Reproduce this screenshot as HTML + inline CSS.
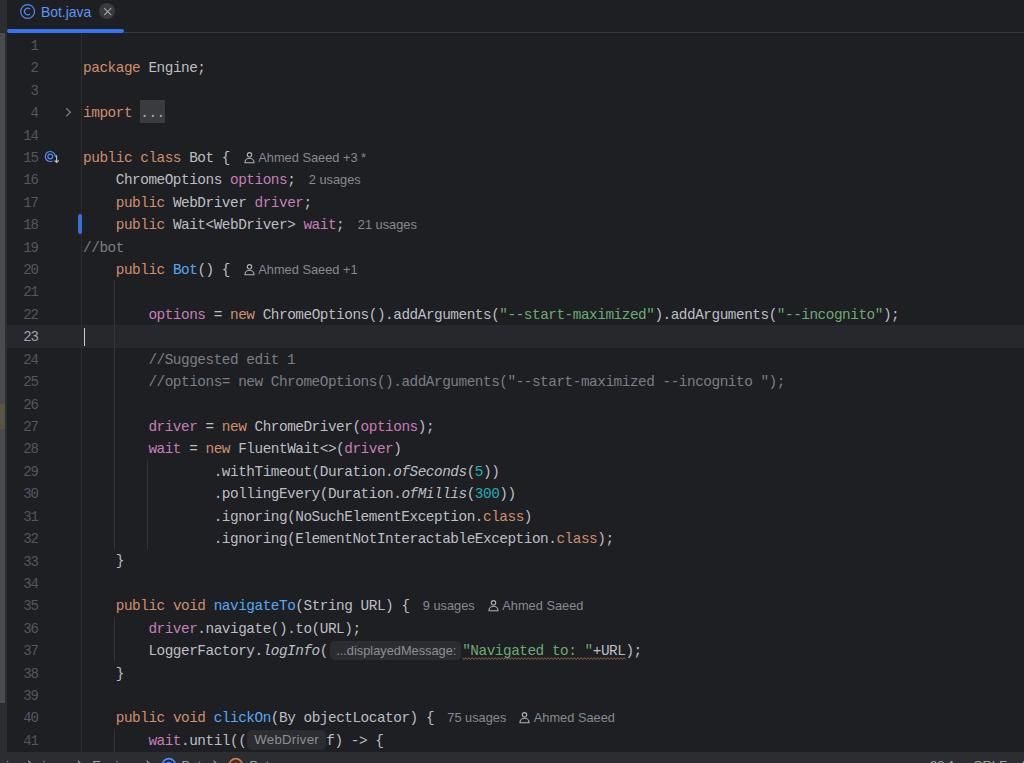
<!DOCTYPE html>
<html><head><meta charset="utf-8">
<style>
*{margin:0;padding:0;box-sizing:border-box}
html,body{width:1024px;height:763px;overflow:hidden;background:#1e1f22}
body{position:relative;font-family:"Liberation Sans",sans-serif}
.a{position:absolute}
#lstrip{position:absolute;left:0;top:0;width:7px;height:763px;background:#2b2d30}
#lstrip2{position:absolute;left:0;top:33px;width:5px;height:670px;background:#4a4b4f}
#ymark{position:absolute;left:0;top:404px;width:5px;height:25px;background:#5b5641}
#tabline{position:absolute;left:124px;top:32px;width:900px;height:1px;background:#393b40}
#tabul{position:absolute;left:7px;top:28.6px;width:117.2px;height:4.8px;border-radius:2.4px;background:#3574f0}
#tabtxt{position:absolute;left:41px;top:4.1px;font-size:13.9px;color:#5a96f6;line-height:16px}
#tabclose{position:absolute;left:99.4px;top:3.3px;width:16px;height:16px;border-radius:50%;background:#393b3f}
#gutline{position:absolute;left:81px;top:33px;width:1px;height:719px;background:#2b2d30}
.ln{position:absolute;left:7px;width:30.6px;height:22.42px;line-height:22.42px;text-align:right;font-family:"Liberation Mono",monospace;font-size:14px;letter-spacing:-1.2px;color:#525760;padding-top:1.1px}
.ln.cur{color:#a1a3ab}
.row{position:absolute;left:83.1px;height:22.42px;line-height:22.42px;white-space:pre;font-family:"Liberation Mono",monospace;font-size:14.4px;letter-spacing:-0.475px;color:#bcbec4;padding-top:1px}
k{color:#cf8e6d} f{color:#c77dbb} s{color:#6aab73;text-decoration:none} c{color:#7a7e85} m{color:#56a8f5} n{color:#2aacb8} i{font-style:italic}
#curband{position:absolute;left:7px;top:325.21px;width:1017px;height:22.42px;background:#26282e}
#caret{position:absolute;left:83.7px;top:327.61px;width:1.4px;height:18px;background:#ced0d6}
.fold{background:#393b40;color:#a8aab0;display:inline-block;height:22.32px;vertical-align:top;margin-top:-1.8px;padding-top:1.8px;padding-right:0.7px}
.hint{display:inline-block;font-family:"Liberation Sans",sans-serif;font-size:13.2px;letter-spacing:0;color:#8c8f94;background:#2b2d30;border-radius:5px;height:19px;line-height:19px;vertical-align:top;margin-top:1.4px;white-space:pre}
.h1{width:130.2px;margin-left:2.45px;margin-right:1.6px;padding-left:5.8px;font-size:12.8px}
.h2{width:79.4px;margin-left:0.5px;margin-right:0;padding-left:7.4px;letter-spacing:0.3px;margin-top:0.4px;height:20px;line-height:19.4px}
.cv{position:absolute;font-size:12.8px;color:#868a91;line-height:22.42px;height:22.42px;white-space:pre;padding-top:1.0px}
.st{position:absolute;top:5.9px;font-size:13px;line-height:16px;color:#a0a2a8;white-space:pre}
.guide{position:absolute;width:1px;background:#313438}
#status{position:absolute;left:0;top:751.7px;width:1024px;height:12px;background:#2b2d30;overflow:hidden}
</style></head><body>
<div id="lstrip"></div><div id="lstrip2"></div><div id="ymark"></div>
<div id="tabline"></div><div id="tabul"></div>
<svg class="a" style="left:20px;top:3.7px" width="15" height="15" viewBox="0 0 15 15"><circle cx="7.6" cy="7.5" r="6.9" fill="none" stroke="#548af7" stroke-width="1.15"/><path d="M10.1 5.1A3.3 3.3 0 1 0 10.1 9.9" fill="none" stroke="#548af7" stroke-width="1.2"/></svg>
<div id="tabtxt">Bot.java</div>
<div id="tabclose"></div>
<svg class="a" style="left:100px;top:3.8px" width="15" height="15" viewBox="0 0 15 15"><path d="M4.2 4.2L11.2 11.2M11.2 4.2L4.2 11.2" stroke="#a4a6ac" stroke-width="1.1"/></svg>
<div id="curband"></div><div id="gutline"></div>
<div class="ln" style="top:33.75px">1</div><div class="row" style="top:33.75px"></div>
<div class="ln" style="top:56.17px">2</div><div class="row" style="top:56.17px"><k>package</k> Engine;</div>
<div class="ln" style="top:78.59px">3</div><div class="row" style="top:78.59px"></div>
<div class="ln" style="top:101.01px">4</div><div class="row" style="top:101.01px"><k>import</k> <span class="fold">...</span></div>
<div class="ln" style="top:123.43px">14</div><div class="row" style="top:123.43px"></div>
<div class="ln" style="top:145.85px">15</div><div class="row" style="top:145.85px"><k>public class</k> Bot {</div>
<div class="ln" style="top:168.27px">16</div><div class="row" style="top:168.27px">    ChromeOptions <f>options</f>;</div>
<div class="ln" style="top:190.69px">17</div><div class="row" style="top:190.69px">    <k>public</k> WebDriver <f>driver</f>;</div>
<div class="ln" style="top:213.11px">18</div><div class="row" style="top:213.11px">    <k>public</k> Wait&lt;WebDriver&gt; <f>wait</f>;</div>
<div class="ln" style="top:235.53px">19</div><div class="row" style="top:235.53px"><c>//bot</c></div>
<div class="ln" style="top:257.95px">20</div><div class="row" style="top:257.95px">    <k>public</k> <m>Bot</m>() {</div>
<div class="ln" style="top:280.37px">21</div><div class="row" style="top:280.37px"></div>
<div class="ln" style="top:302.79px">22</div><div class="row" style="top:302.79px">        <f>options</f> = <k>new</k> ChromeOptions().addArguments(<s>"--start-maximized"</s>).addArguments(<s>"--incognito"</s>);</div>
<div class="ln cur" style="top:325.21px">23</div><div class="row" style="top:325.21px"></div>
<div class="ln" style="top:347.63px">24</div><div class="row" style="top:347.63px">        <c>//Suggested edit 1</c></div>
<div class="ln" style="top:370.05px">25</div><div class="row" style="top:370.05px">        <c>//options= new ChromeOptions().addArguments("--start-maximized --incognito ");</c></div>
<div class="ln" style="top:392.47px">26</div><div class="row" style="top:392.47px"></div>
<div class="ln" style="top:414.89px">27</div><div class="row" style="top:414.89px">        <f>driver</f> = <k>new</k> ChromeDriver(<f>options</f>);</div>
<div class="ln" style="top:437.31px">28</div><div class="row" style="top:437.31px">        <f>wait</f> = <k>new</k> FluentWait&lt;&gt;(<f>driver</f>)</div>
<div class="ln" style="top:459.73px">29</div><div class="row" style="top:459.73px">                .withTimeout(Duration.<i>ofSeconds</i>(<n>5</n>))</div>
<div class="ln" style="top:482.15px">30</div><div class="row" style="top:482.15px">                .pollingEvery(Duration.<i>ofMillis</i>(<n>300</n>))</div>
<div class="ln" style="top:504.57px">31</div><div class="row" style="top:504.57px">                .ignoring(NoSuchElementException.<k>class</k>)</div>
<div class="ln" style="top:526.99px">32</div><div class="row" style="top:526.99px">                .ignoring(ElementNotInteractableException.<k>class</k>);</div>
<div class="ln" style="top:549.41px">33</div><div class="row" style="top:549.41px">    }</div>
<div class="ln" style="top:571.83px">34</div><div class="row" style="top:571.83px"></div>
<div class="ln" style="top:594.25px">35</div><div class="row" style="top:594.25px">    <k>public void</k> <m>navigateTo</m>(String URL) {</div>
<div class="ln" style="top:616.67px">36</div><div class="row" style="top:616.67px">        <f>driver</f>.navigate().to(URL);</div>
<div class="ln" style="top:639.09px">37</div><div class="row" style="top:639.09px">        LoggerFactory.<i>logInfo</i>(<span class="hint h1">...displayedMessage:</span><s>"Navigated to: "</s>+URL);</div>
<div class="ln" style="top:661.51px">38</div><div class="row" style="top:661.51px">    }</div>
<div class="ln" style="top:683.93px">39</div><div class="row" style="top:683.93px"></div>
<div class="ln" style="top:706.35px">40</div><div class="row" style="top:706.35px">    <k>public void</k> <m>clickOn</m>(By objectLocator) {</div>
<div class="ln" style="top:728.77px">41</div><div class="row" style="top:728.77px">        <f>wait</f>.until((<span class="hint h2">WebDriver</span>f) -&gt; {</div>
<div id="caret"></div>
<div class="guide" style="left:114px;top:280.37px;height:269.04px"></div>
<div class="guide" style="left:147px;top:459.73px;height:89.68px"></div>
<div class="guide" style="left:114px;top:616.67px;height:44.84px"></div>
<div class="guide" style="left:114px;top:728.77px;height:22.93px"></div>
<div class="a" style="left:77.5px;top:213.61px;width:4px;height:20px;border-radius:2px;background:#3b6fd0"></div>
<svg class="a" style="left:0;top:0" width="1024" height="763"><path d="M66.2 108.3L70.4 112.3L66.2 116.3" fill="none" stroke="#7b7e85" stroke-width="1.2"/><circle cx="50.3" cy="156.5" r="5" fill="none" stroke="#548af7" stroke-width="1.2" stroke-dasharray="26 5.5" transform="rotate(62 50.3 156.5)"/><circle cx="50.3" cy="156.5" r="2.4" fill="none" stroke="#548af7" stroke-width="1.2"/><path d="M56.6 155.2V162.3M54.5 160.3L56.6 162.4L58.7 160.3" fill="none" stroke="#c4c5c0" stroke-width="1.1"/></svg>
<svg class="a" style="left:243.7px;top:145.85px" width="12" height="22" viewBox="0 0 12 22"><circle cx="5.5" cy="8.8" r="2.2" fill="none" stroke="#b0b2b7" stroke-width="1.1"/><path d="M1 16.8v-0.6a4.5 3.9 0 0 1 9 0v0.6z" fill="none" stroke="#b0b2b7" stroke-width="1.1"/></svg>
<div class="cv" style="left:258.3px;top:145.85px">Ahmed Saeed +3 *</div>
<div class="cv" style="left:308.8px;top:168.27px">2 usages</div>
<div class="cv" style="left:357.8px;top:213.11px">21 usages</div>
<svg class="a" style="left:243.7px;top:257.95px" width="12" height="22" viewBox="0 0 12 22"><circle cx="5.5" cy="8.8" r="2.2" fill="none" stroke="#b0b2b7" stroke-width="1.1"/><path d="M1 16.8v-0.6a4.5 3.9 0 0 1 9 0v0.6z" fill="none" stroke="#b0b2b7" stroke-width="1.1"/></svg>
<div class="cv" style="left:258.3px;top:257.95px">Ahmed Saeed +1</div>
<div class="cv" style="left:422.8px;top:594.25px">9 usages</div>
<svg class="a" style="left:487.5px;top:594.25px" width="12" height="22" viewBox="0 0 12 22"><circle cx="5.5" cy="8.8" r="2.2" fill="none" stroke="#b0b2b7" stroke-width="1.1"/><path d="M1 16.8v-0.6a4.5 3.9 0 0 1 9 0v0.6z" fill="none" stroke="#b0b2b7" stroke-width="1.1"/></svg>
<div class="cv" style="left:502.3px;top:594.25px">Ahmed Saeed</div>
<div class="cv" style="left:447.3px;top:706.35px">75 usages</div>
<svg class="a" style="left:519.0px;top:706.35px" width="12" height="22" viewBox="0 0 12 22"><circle cx="5.5" cy="8.8" r="2.2" fill="none" stroke="#b0b2b7" stroke-width="1.1"/><path d="M1 16.8v-0.6a4.5 3.9 0 0 1 9 0v0.6z" fill="none" stroke="#b0b2b7" stroke-width="1.1"/></svg>
<div class="cv" style="left:533.8px;top:706.35px">Ahmed Saeed</div>
<svg class="a" style="left:0;top:0" width="1024" height="763"><polyline points="462.40,657.69 464.05,659.49 465.70,657.69 467.35,659.49 469.00,657.69 470.65,659.49 472.30,657.69 473.95,659.49 475.60,657.69 477.25,659.49 478.90,657.69 480.55,659.49 482.20,657.69 483.85,659.49 485.50,657.69 487.15,659.49 488.80,657.69 490.45,659.49 492.10,657.69 493.75,659.49 495.40,657.69 497.05,659.49 498.70,657.69 500.35,659.49 502.00,657.69 503.65,659.49 505.30,657.69 506.95,659.49 508.60,657.69 510.25,659.49 511.90,657.69 513.55,659.49 515.20,657.69 516.85,659.49 518.50,657.69 520.15,659.49 521.80,657.69 523.45,659.49 525.10,657.69 526.75,659.49 528.40,657.69 530.05,659.49 531.70,657.69 533.35,659.49 535.00,657.69 536.65,659.49 538.30,657.69 539.95,659.49 541.60,657.69 543.25,659.49 544.90,657.69 546.55,659.49 548.20,657.69 549.85,659.49 551.50,657.69 553.15,659.49 554.80,657.69 556.45,659.49 558.10,657.69 559.75,659.49 561.40,657.69 563.05,659.49 564.70,657.69 566.35,659.49 568.00,657.69 569.65,659.49 571.30,657.69 572.95,659.49 574.60,657.69 576.25,659.49 577.90,657.69 579.55,659.49 581.20,657.69 582.85,659.49 584.50,657.69 586.15,659.49 587.80,657.69 589.45,659.49 591.10,657.69 592.75,659.49 594.40,657.69 596.05,659.49 597.70,657.69 599.35,659.49 601.00,657.69 602.65,659.49 604.30,657.69 605.95,659.49 607.60,657.69 609.25,659.49 610.90,657.69 612.55,659.49 614.20,657.69 615.85,659.49 617.50,657.69 619.15,659.49 620.80,657.69 622.45,659.49 624.10,657.69 625.75,659.49" fill="none" stroke="#9e6e4b" stroke-width="0.85"/></svg>
<div id="status">
<div class="st" style="left:-12px">main</div><div class="st" style="left:42.5px">java</div><div class="st" style="left:92.3px">Engine</div>
<svg class="a" style="left:0;top:0" width="1024" height="20"><path d="M28.2 8.6L31.8 12.2L28.2 15.8M77.8 8.6L81.4 12.2L77.8 15.8M146.6 8.6L150.2 12.2L146.6 15.8M213.6 8.6L217.2 12.2L213.6 15.8" fill="none" stroke="#a0a2a8" stroke-width="1.1"/></svg>
<svg class="a" style="left:0;top:0" width="300" height="20"><circle cx="168.8" cy="13.3" r="6.6" fill="#1f2a44" stroke="#548af7" stroke-width="1.7"/><path d="M171.2 11.6A3 3 0 1 0 171.2 15" fill="none" stroke="#548af7" stroke-width="1.3"/><circle cx="235.8" cy="13.3" r="6.6" fill="#3e2e28" stroke="#d9774f" stroke-width="1.7"/><path d="M233 16V11.5M233 12.5Q235.8 9.5 238.6 12.5V16" fill="none" stroke="#d9774f" stroke-width="1.2"/></svg><div class="st" style="left:181.5px">Bot</div>
<div class="st" style="left:249.5px">Bot</div>
<div class="st" style="left:930px">23:1</div><div class="st" style="left:973px">CRLF</div><div class="st" style="left:1022px">U</div>
</div>
</body></html>
